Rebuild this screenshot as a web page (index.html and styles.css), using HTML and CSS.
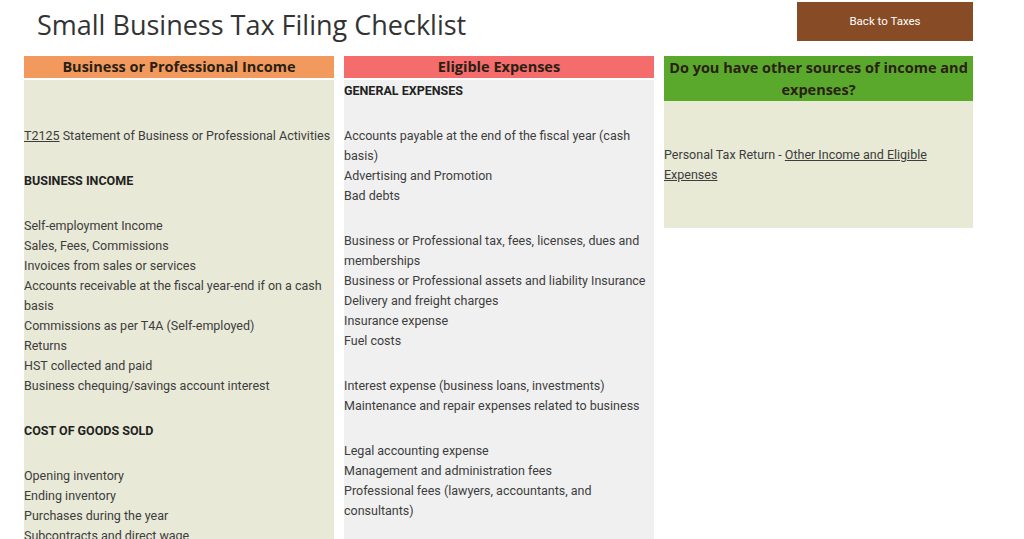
FILE: index.html
```html
<!DOCTYPE html>
<html lang="en">
<head>
    <meta charset="UTF-8">
    <meta name="viewport" content="width=device-width, initial-scale=1.0">
    <title>Small Business Tax Filing Checklist</title>
    <link rel="stylesheet" href="styles.css">
</head>
<body>
    <div class="top">
        <h1 class="page-title">Small Business Tax Filing Checklist</h1>
        <a class="back-btn" href="#">Back to Taxes</a>
    </div>
    <div class="columns">
        <div class="col income">
            <div class="col-head">Business or Professional Income</div>
            <div class="col-body">
                <p>&nbsp;</p>
                <p><a href="#">T2125</a> Statement of Business or Professional Activities</p>
                <p><strong>BUSINESS INCOME</strong></p>
                <p>Self-employment Income<br>
                Sales, Fees, Commissions<br>
                Invoices from sales or services<br>
                Accounts receivable at the fiscal year-end if on a cash basis<br>
                Commissions as per T4A (Self-employed)<br>
                Returns<br>
                HST collected and paid<br>
                Business chequing/savings account interest</p>
                <p><strong>COST OF GOODS SOLD</strong></p>
                <p>Opening inventory<br>
                Ending inventory<br>
                Purchases during the year<br>
                Subcontracts and direct wage</p>
            </div>
        </div>
        <div class="col expenses">
            <div class="col-head">Eligible Expenses</div>
            <div class="col-body">
                <p><strong>GENERAL EXPENSES</strong></p>
                <p>Accounts payable at the end of the fiscal year (cash basis)<br>
                Advertising and Promotion<br>
                Bad debts</p>
                <p>Business or Professional tax, fees, licenses, dues and memberships<br>
                Business or Professional assets and liability Insurance<br>
                Delivery and freight charges<br>
                Insurance expense<br>
                Fuel costs</p>
                <p>Interest expense (business loans, investments)<br>
                Maintenance and repair expenses related to business</p>
                <p>Legal accounting expense<br>
                Management and administration fees<br>
                Professional fees (lawyers, accountants, and consultants)</p>
                <p>&nbsp;</p>
            </div>
        </div>
        <div class="col other">
            <div class="col-head">Do you have other sources of income and expenses?</div>
            <div class="col-body">
                <p>&nbsp;</p>
                <p>Personal Tax Return - <a href="#">Other Income and Eligible Expenses</a></p>
                <p>&nbsp;</p>
            </div>
        </div>
    </div>
</body>
</html>
```

FILE: styles.css
```css
body {
    margin: 0;
    background: #fff;
    font-family: Roboto, "Liberation Sans", sans-serif;
    color: #3d3d3d;
}

.top {
    display: flex;
    justify-content: space-between;
    align-items: flex-start;
    padding: 2px 51px 0 37px;
    height: 54px;
}

.page-title {
    margin: 6px 0 0;
    font-family: "Open Sans", sans-serif;
    font-weight: 400;
    font-size: 27px;
    line-height: 34px;
    color: #333;
}

.back-btn {
    display: block;
    width: 176px;
    height: 39px;
    line-height: 39px;
    text-align: center;
    background-color: #874c25;
    color: #fff;
    font-size: 11.5px;
    text-decoration: none;
}

.columns {
    display: flex;
    align-items: flex-start;
    gap: 10px;
    padding-left: 24px;
}

.col {
    width: 310px;
    flex: none;
}

.col-head {
    font-family: "Open Sans", sans-serif;
    font-weight: 700;
    font-size: 14.5px;
    line-height: 22px;
    text-align: center;
    color: #2a2014;
    margin-bottom: 2px;
}

.col-body {
    padding-top: 1px;
    font-size: 12.5px;
    line-height: 20px;
    overflow: hidden;
}

.col-body p {
    margin: 0 0 25px;
}

.col-body p:last-child {
    margin-bottom: 0;
}

.col-body a {
    color: inherit;
}

.col-body strong {
    color: #222;
}

.income .col-head {
    background-color: #f29a5e;
}

.income .col-body {
    background-color: #e8e9d7;
}

.expenses .col-head {
    background-color: #f46c6b;
}

.expenses .col-body {
    background-color: #f0f0f0;
}

.other {
    width: 309px;
}

.other .col-head {
    background-color: #5aa92c;
    margin-bottom: 0;
    padding-top: 1px;
}

.other .col-body {
    background-color: #e8ead6;
    padding-top: 0;
}

.other .col-body p {
    margin-bottom: 24px;
}

.other .col-body p + p + p {
    margin-bottom: 0;
}

.other .col-body p:nth-child(2) {
    margin-bottom: 23px;
}
```
